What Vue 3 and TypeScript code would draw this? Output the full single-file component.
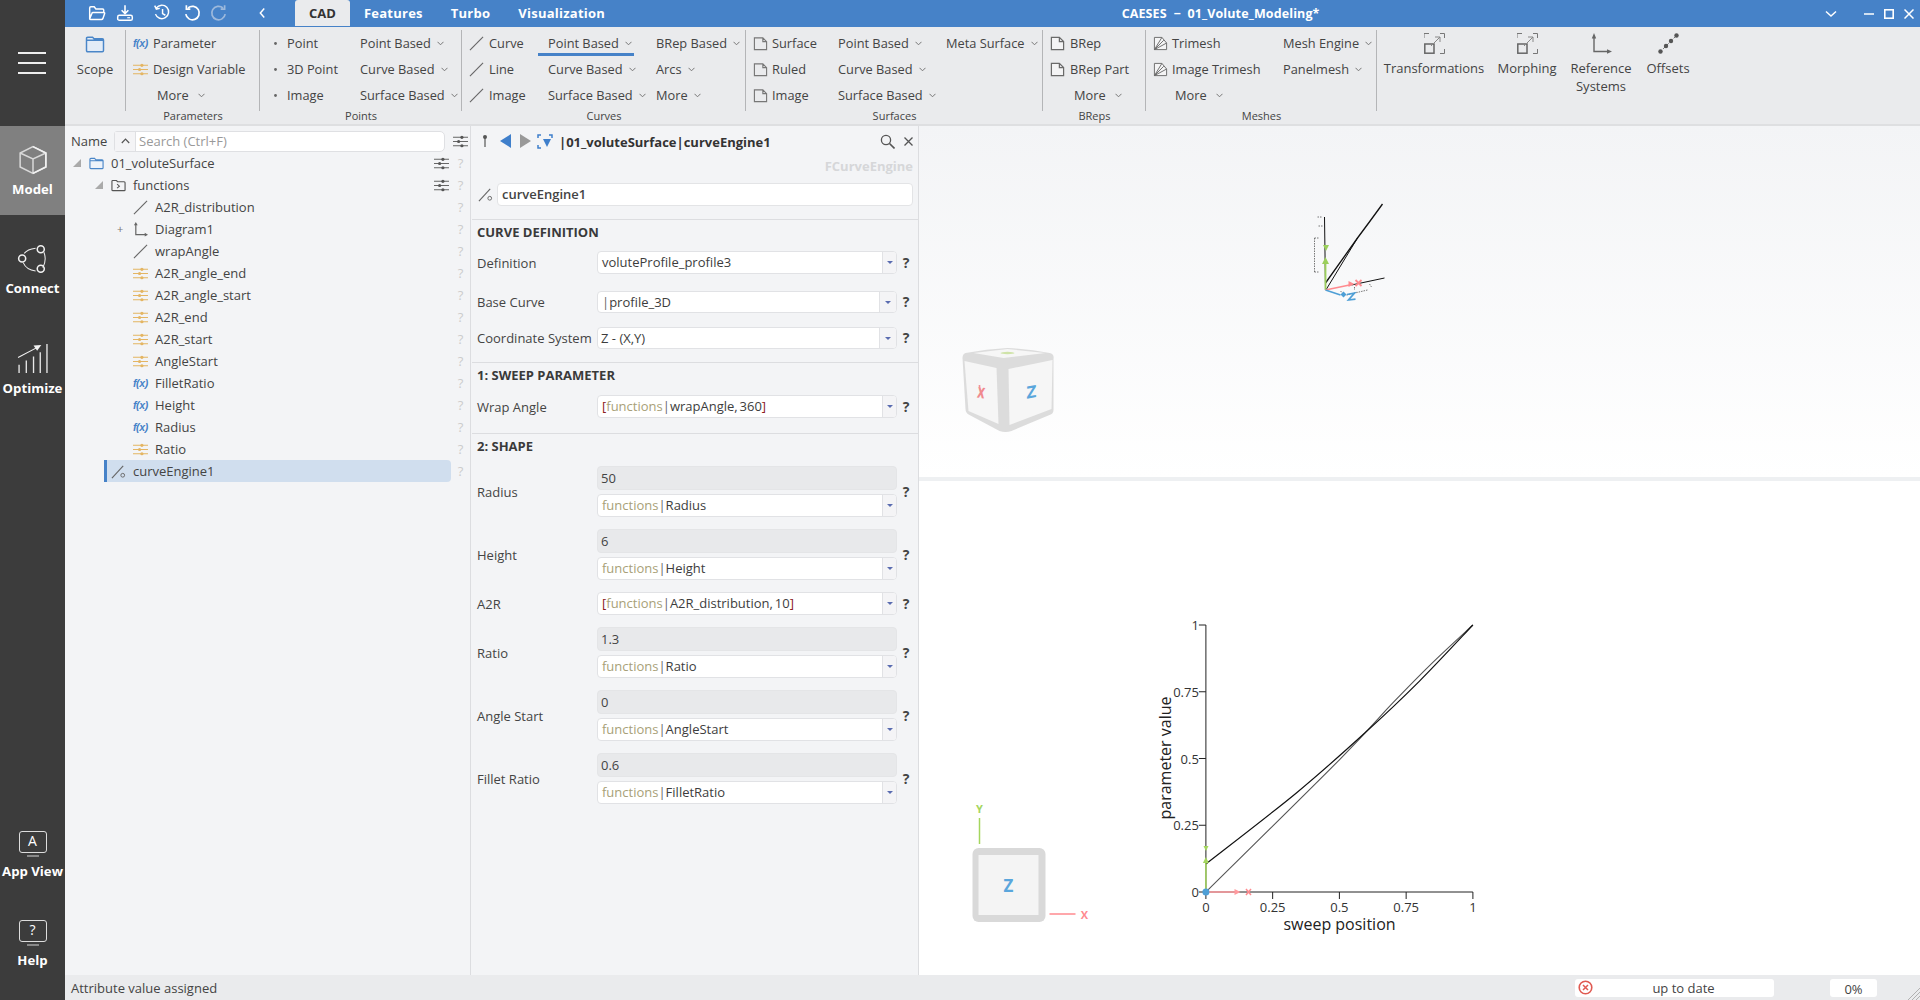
<script setup lang="ts">
type Item = { t: string; icon?: string; chev?: boolean; indent?: number };
type Col = { w: number; slot: number; items: Item[] };
type Group = { label: string; w: number; pad: number; cols: Col[] };

const quick = [
	{ icon: 'q-open', ml: 23 },
	{ icon: 'q-save', ml: 10 },
	{ icon: 'q-hist', ml: 19 },
	{ icon: 'q-undo', ml: 12 },
	{ icon: 'q-redo', ml: 9 },
	{ icon: 'q-back', ml: 25 },
];

const groups: Group[] = [
	{
		label: 'Parameters', w: 134, pad: 7,
		cols: [{
			w: 125, slot: 20,
			items: [
				{ t: 'Parameter', icon: 'fx' },
				{ t: 'Design Variable', icon: 'sliders' },
				{ t: 'More', chev: true, indent: 24 },
			],
		}],
	},
	{
		label: 'Points', w: 202, pad: 8,
		cols: [
			{ w: 92, slot: 19, items: [{ t: 'Point', icon: 'dot' }, { t: '3D Point', icon: 'dot' }, { t: 'Image', icon: 'dot' }] },
			{ w: 100, slot: 0, items: [{ t: 'Point Based', chev: true }, { t: 'Curve Based', chev: true }, { t: 'Surface Based', chev: true }] },
		],
	},
	{
		label: 'Curves', w: 284, pad: 7,
		cols: [
			{ w: 79, slot: 20, items: [{ t: 'Curve', icon: 'line' }, { t: 'Line', icon: 'line' }, { t: 'Image', icon: 'line' }] },
			{ w: 108, slot: 0, items: [{ t: 'Point Based', chev: true }, { t: 'Curve Based', chev: true }, { t: 'Surface Based', chev: true }] },
			{ w: 88, slot: 0, items: [{ t: 'BRep Based', chev: true }, { t: 'Arcs', chev: true }, { t: 'More', chev: true }] },
		],
	},
	{
		label: 'Surfaces', w: 297, pad: 7,
		cols: [
			{ w: 85, slot: 19, items: [{ t: 'Surface', icon: 'page' }, { t: 'Ruled', icon: 'page' }, { t: 'Image', icon: 'page' }] },
			{ w: 108, slot: 0, items: [{ t: 'Point Based', chev: true }, { t: 'Curve Based', chev: true }, { t: 'Surface Based', chev: true }] },
			{ w: 96, slot: 0, items: [{ t: 'Meta Surface', chev: true }] },
		],
	},
	{
		label: 'BReps', w: 103, pad: 7,
		cols: [{
			w: 95, slot: 20,
			items: [{ t: 'BRep', icon: 'brep' }, { t: 'BRep Part', icon: 'brep' }, { t: 'More', chev: true, indent: 24 }],
		}],
	},
	{
		label: 'Meshes', w: 231, pad: 7,
		cols: [
			{ w: 130, slot: 19, items: [{ t: 'Trimesh', icon: 'mesh' }, { t: 'Image Trimesh', icon: 'mesh' }, { t: 'More', chev: true, indent: 22 }] },
			{ w: 92, slot: 0, items: [{ t: 'Mesh Engine', chev: true }, { t: 'Panelmesh', chev: true }] },
		],
	},
];

const bigButtons = [
	{ lines: ['Transformations'], icon: 'big-trans', w: 114 },
	{ lines: ['Morphing'], icon: 'big-trans', w: 72 },
	{ lines: ['Reference', 'Systems'], icon: 'big-axis', w: 76 },
	{ lines: ['Offsets'], icon: 'big-offset', w: 58 },
];

const tree = [
	{ name: '01_voluteSurface', level: 0, icon: 'folder', exp: 'tri', tune: true },
	{ name: 'functions', level: 1, icon: 'folder-fn', exp: 'tri', tune: true },
	{ name: 'A2R_distribution', level: 2, icon: 'line' },
	{ name: 'Diagram1', level: 2, icon: 'axis', exp: 'plus' },
	{ name: 'wrapAngle', level: 2, icon: 'line' },
	{ name: 'A2R_angle_end', level: 2, icon: 'sliders' },
	{ name: 'A2R_angle_start', level: 2, icon: 'sliders' },
	{ name: 'A2R_end', level: 2, icon: 'sliders' },
	{ name: 'A2R_start', level: 2, icon: 'sliders' },
	{ name: 'AngleStart', level: 2, icon: 'sliders' },
	{ name: 'FilletRatio', level: 2, icon: 'fx' },
	{ name: 'Height', level: 2, icon: 'fx' },
	{ name: 'Radius', level: 2, icon: 'fx' },
	{ name: 'Ratio', level: 2, icon: 'sliders' },
	{ name: 'curveEngine1', level: 1, icon: 'engine', selected: true },
];

const shapeRows = [
	{ label: 'Radius', value: '50', fn: 'Radius' },
	{ label: 'Height', value: '6', fn: 'Height' },
	{ label: 'A2R', list: 'A2R_distribution, 10' },
	{ label: 'Ratio', value: '1.3', fn: 'Ratio' },
	{ label: 'Angle Start', value: '0', fn: 'AngleStart' },
	{ label: 'Fillet Ratio', value: '0.6', fn: 'FilletRatio' },
];

// plot area of the big diagram, in page pixels
const px = (t: number) => 1206.4 + 267 * t;
const py = (v: number) => 892 - 267 * v;
const ticks = [
	{ v: 0, l: '0' },
	{ v: 0.25, l: '0.25' },
	{ v: 0.5, l: '0.5' },
	{ v: 0.75, l: '0.75' },
	{ v: 1, l: '1' },
];

// catmull-rom through the sampled points so the curves stay smooth
function smooth(p: number[][]): string {
	const pts = p.map(([t, v]) => [px(t), py(v)]);
	let d = `M${pts[0][0]} ${pts[0][1]}`;
	for (let i = 0; i < pts.length - 1; i++) {
		const a = pts[Math.max(i - 1, 0)];
		const b = pts[i];
		const c = pts[i + 1];
		const e = pts[Math.min(i + 2, pts.length - 1)];
		d += `C${b[0] + (c[0] - a[0]) / 6} ${b[1] + (c[1] - a[1]) / 6} ${c[0] - (e[0] - b[0]) / 6} ${c[1] - (e[1] - b[1]) / 6} ${c[0]} ${c[1]}`;
	}
	return d;
}
const blackCurve = smooth([[0, 0.105], [0.34, 0.372], [0.6, 0.6], [0.8, 0.79], [1, 1]]);
const grayCurve = smooth([[0, 0], [0.5, 0.495], [0.7, 0.708], [0.85, 0.86], [1, 1]]);
</script>

<template>
	<div class="app">
		<svg class="sprites" aria-hidden="true">
			<symbol id="q-open" viewBox="0 0 16 16"><path d="M1.5 13V3.500q0-1 1-1h3l1.500 2h6q1 0 1 1V7M1.500 13q0 .8 1 .8h9.500q.8 0 1.200-.8l1.600-4.500q.2-1-.8-1H4.500q-.8 0-1 .7z" fill="none" stroke="currentColor" stroke-width="1.3" /></symbol>
			<symbol id="q-save" viewBox="0 0 16 16"><path d="M8 1v7M5 5.500 8 8.500l3-3" fill="none" stroke="currentColor" stroke-width="1.4" /><rect x="1.5" y="10" width="13" height="4.5" rx="1.5" fill="none" stroke="currentColor" stroke-width="1.3" /><path d="M10 12.200h2.500" stroke="currentColor" /></symbol>
			<symbol id="q-hist" viewBox="0 0 16 16"><path d="M3 3.500A6 6 0 1 1 2.200 9M1.500 1.500 3 4.500l3-.6M8.500 4.500V8.500L11 10" fill="none" stroke="currentColor" stroke-width="1.3" /></symbol>
			<symbol id="q-undo" viewBox="0 0 16 16"><path d="M4.500 3.500A6 6 0 1 1 2.500 9M3 1v3.500h3.500" fill="none" stroke="currentColor" stroke-width="1.5" /></symbol>
			<symbol id="q-redo" viewBox="0 0 16 16"><path d="M11.500 3.500A6 6 0 1 0 13.500 9M13 1v3.500H9.500" fill="none" stroke="#9db9dc" stroke-width="1.5" /></symbol>
			<symbol id="q-back" viewBox="0 0 16 16"><path d="M10 4 6.500 8l3.500 4" fill="none" stroke="currentColor" stroke-width="1.3" /></symbol>

			<symbol id="folder" viewBox="0 0 16 16"><path d="M1 3.500q0-1 1-1h4l1.200 1.500H14q1 0 1 1v7.500q0 1-1 1H2q-1 0-1-1z M1 5h14" fill="#eef3fa" stroke="#4a86c8" stroke-width="1.2" /></symbol>
			<symbol id="folder-fn" viewBox="0 0 16 16"><path d="M1 3.500q0-.8.8-.8h4l1.200 1.300h7q1 0 1 1v7.700q0 .8-.8.8H1.800q-.8 0-.8-.8z" fill="none" stroke="#555" stroke-width="1.2" /><path d="m6.500 6.500 2.500 2.200-2.500 2.200" fill="none" stroke="#555" stroke-width="1.1" /></symbol>
			<symbol id="sliders" viewBox="0 0 16 16"><g stroke="#e4b562" stroke-width="1.2"><path d="M0 3.500h16M0 8h16M0 12.500h16" /></g><circle cx="9.5" cy="3.5" r="1.7" fill="#e4b562" /><circle cx="7" cy="8" r="1.7" fill="#e4b562" /><circle cx="9.5" cy="12.5" r="1.7" fill="#e4b562" /></symbol>
			<symbol id="tune" viewBox="0 0 16 16"><g stroke="#666" stroke-width="1.2"><path d="M0 3.500h16M0 8h16M0 12.500h16" /></g><circle cx="9.5" cy="3.5" r="1.7" fill="#555" /><circle cx="6" cy="8" r="1.7" fill="#555" /><circle cx="9.5" cy="12.5" r="1.7" fill="#555" /></symbol>
			<symbol id="line" viewBox="0 0 16 16"><path d="M1 15 15 1" stroke="#666" stroke-width="1.2" /></symbol>
			<symbol id="engine" viewBox="0 0 16 16"><path d="M1 15 13 2" stroke="#666" stroke-width="1.2" /><circle cx="12.5" cy="12" r="2" fill="none" stroke="#666" /></symbol>
			<symbol id="axis" viewBox="0 0 16 16"><path d="M3 2v11.500h11" fill="none" stroke="#666" stroke-width="1.3" /><path d="M3 0 1 3.500h4zM16 13.500l-3.500-2v4z" fill="#666" /></symbol>
			<symbol id="dot" viewBox="0 0 16 16"><circle cx="8" cy="8" r="1.5" fill="#666" /></symbol>
			<symbol id="page" viewBox="0 0 16 16"><path d="M1.500 2h9l4 4v8.500h-13zM10.500 2v4h4" fill="none" stroke="#777" stroke-width="1.2" /></symbol>
			<symbol id="brep" viewBox="0 0 16 16"><path d="M1.500 1.500h8.500l4.500 4.500v8.500h-13zM10 1.500V6h4.500" fill="#f4f4f5" stroke="#6a6a6a" stroke-width="1.3" /></symbol>
			<symbol id="mesh" viewBox="0 0 16 16"><path d="M1.500 1.500h8l5 6v7h-13zM1.500 14.500 9.500 1.500M1.500 14.500l10-10M1.500 14.500l13-7" fill="#f4f4f5" stroke="#6a6a6a" stroke-width="1" /></symbol>

			<symbol id="big-trans" viewBox="0 0 21 21"><path d="M0 5V.5h5M16 .5h4.500V5M20.500 16v4.500H16" fill="none" stroke="#777" /><rect x=".8" y="11" width="9.2" height="9.2" fill="none" stroke="#666" stroke-width="1.5" /><path d="M7 13 16 4M11 4h5v5" fill="none" stroke="#888" /></symbol>
			<symbol id="big-axis" viewBox="0 0 21 21"><path d="M3 3v15.500h15" fill="none" stroke="#666" stroke-width="1.4" /><path d="M3 0 .8 5.500h4.400zM21 18.500l-5-2.200v4.400z" fill="#666" /></symbol>
			<symbol id="big-offset" viewBox="0 0 21 21"><path d="M1.500 19.500 19.500 1.500" stroke="#777" stroke-dasharray="3 2" /><circle cx="2.5" cy="18.5" r="2.2" fill="#555" /><circle cx="8" cy="13" r="2.2" fill="#555" /><circle cx="13" cy="8" r="2.2" fill="#555" /><circle cx="18.5" cy="2.5" r="2.2" fill="#555" /></symbol>

			<symbol id="r-cube" viewBox="0 0 28 28"><path d="M14 1.500 26 7.500v13L14 26.500 2 20.500v-13zM2 7.500 14 13l12-5.500M14 13v13.500" fill="none" stroke="#d8d8d8" stroke-width="1.4" /><path d="M14 1.500 26 7.500v13L14 26.500" fill="none" stroke="#f2f2f2" stroke-width="1.5" /></symbol>
			<symbol id="r-connect" viewBox="0 0 30 30"><path d="M7 10Q10 6 18 5M6 19q3 7 12 8M26 9q3 7-1 15" fill="none" stroke="#eee" stroke-width="1" /><g fill="none" stroke="#f2f2f2" stroke-width="1.5"><circle cx="23" cy="6" r="3.4" /><circle cx="5" cy="15" r="3.4" /><circle cx="23" cy="25" r="3.4" /></g></symbol>
			<symbol id="r-opt" viewBox="0 0 30 30"><g stroke="#e8e8e8" stroke-width="1.3"><path d="M2 29v-8M9 29V17M16 29V13M22.500 29V9M29 29V1" /></g><path d="M1 14 22 3" stroke="#f2f2f2" stroke-width="1" /><path d="M23.500 2 16 2.500l3.500 5z" fill="#f2f2f2" /></symbol>
		</svg>

		<aside class="rail">
			<div class="burger"><i /><i /><i /></div>
			<div class="rail-item active">
				<svg class="r-icon" width="30" height="30"><use href="#r-cube" /></svg>
				<span>Model</span>
			</div>
			<div class="rail-item connect">
				<svg class="r-icon" width="31" height="31"><use href="#r-connect" /></svg>
				<span>Connect</span>
			</div>
			<div class="rail-item optimize">
				<svg class="r-icon" width="31" height="31"><use href="#r-opt" /></svg>
				<span>Optimize</span>
			</div>
			<div class="rail-item appview">
				<div class="monitor">A</div>
				<span>App View</span>
			</div>
			<div class="rail-item help">
				<div class="monitor">?</div>
				<span>Help</span>
			</div>
		</aside>

		<main class="main">
			<header class="titlebar">
				<svg v-for="q in quick" :key="q.icon" class="quick" :style="{ marginLeft: q.ml + 'px' }" width="18" height="18"><use :href="'#' + q.icon" /></svg>
				<nav class="tabs">
					<span class="tab current">CAD</span>
					<span class="tab">Features</span>
					<span class="tab">Turbo</span>
					<span class="tab">Visualization</span>
				</nav>
				<div class="title">CAESES &nbsp;&minus;&nbsp; 01_Volute_Modeling*</div>
				<div class="winctl">
					<svg width="12" height="8" viewBox="0 0 12 8"><path d="M1 1.500 6 6l5-4.500" fill="none" stroke="#fff" stroke-width="1.5" /></svg>
					<svg class="w-min" width="10" height="10" viewBox="0 0 10 10"><path d="M0 5h10" stroke="#fff" stroke-width="1.5" /></svg>
					<svg class="w-max" width="10" height="10" viewBox="0 0 10 10"><rect x=".8" y=".8" width="8.4" height="8.4" fill="none" stroke="#fff" stroke-width="1.6" /></svg>
					<svg class="w-close" width="10" height="10" viewBox="0 0 10 10"><path d="m.5.5 9 9m0-9-9 9" stroke="#fff" stroke-width="1.5" /></svg>
				</div>
			</header>

			<section class="ribbon">
				<div class="group scope">
					<div class="group-body big">
						<svg width="20" height="17" viewBox="0 0 16 14" class="scope-icon"><path d="M1 2q0-1 1-1h4l1.200 1.200H14q1 0 1 1V12q0 1-1 1H2q-1 0-1-1zM1 3.500h14" fill="#e3ecf7" stroke="#4a86c8" stroke-width="1.2" /></svg>
						<span>Scope</span>
					</div>
				</div>
				<div v-for="g in groups" :key="g.label" class="group" :style="{ width: g.w + 'px' }">
					<div class="group-body" :style="{ paddingLeft: g.pad + 'px' }">
						<div v-for="(c, ci) in g.cols" :key="ci" class="col" :style="{ width: c.w + 'px' }">
							<div
								v-for="it in c.items"
								:key="it.t"
								class="item"
								:class="{ underlined: g.label === 'Curves' && ci === 1 && it.t === 'Point Based' }"
								:style="{ marginLeft: (it.indent ?? 0) + 'px' }"
							>
								<span v-if="it.icon" class="slot" :style="{ width: c.slot + 'px' }">
									<span v-if="it.icon === 'fx'" class="fx">f(x)</span>
									<svg v-else width="15" height="15"><use :href="'#' + it.icon" /></svg>
								</span>
								<span>{{ it.t }}</span>
								<svg v-if="it.chev" class="chev" :class="{ wide: it.indent }" width="7" height="5" viewBox="0 0 7 5"><path d="m.5.8 3 3 3-3" fill="none" stroke="#777" /></svg>
							</div>
						</div>
					</div>
					<div class="group-label">{{ g.label }}</div>
				</div>
				<div class="bigs">
					<div v-for="b in bigButtons" :key="b.lines[0]" class="bigbtn" :style="{ width: b.w + 'px' }">
						<svg width="21" height="21"><use :href="'#' + b.icon" /></svg>
						<span v-for="l in b.lines" :key="l">{{ l }}</span>
					</div>
				</div>
			</section>

			<div class="workspace">
				<section class="tree">
					<div class="tree-head">
						<span class="name-col">Name</span>
						<div class="search">
							<span class="sort"><svg width="9" height="6" viewBox="0 0 9 6"><path d="M.8 5 4.500 1.200 8.200 5" fill="none" stroke="#555" stroke-width="1.2" /></svg></span>
							<span class="search-text">Search (Ctrl+F)</span>
						</div>
						<svg class="head-tune" width="15" height="15"><use href="#tune" /></svg>
					</div>
					<div v-for="r in tree" :key="r.name" class="row">
						<div class="row-main" :class="{ selected: r.selected }" :style="{ marginLeft: r.selected ? undefined : 6 + 22 * r.level + 'px' }">
							<span v-if="!r.selected" class="exp">
								<svg v-if="r.exp === 'tri'" width="8" height="8" viewBox="0 0 8 8"><path d="M8 0v8H0z" fill="#aaa" /></svg>
								<span v-else-if="r.exp === 'plus'" class="plus">+</span>
							</span>
							<span class="row-icon">
								<span v-if="r.icon === 'fx'" class="fx">f(x)</span>
								<svg v-else width="15" height="15"><use :href="'#' + r.icon" /></svg>
							</span>
							<span class="row-name">{{ r.name }}</span>
							<svg v-if="r.tune" width="15" height="15"><use href="#tune" /></svg>
						</div>
						<span class="row-q">?</span>
					</div>
				</section>

				<section class="props">
					<div class="prop-head">
						<svg width="10" height="14" viewBox="0 0 10 14"><circle cx="5" cy="3" r="2" fill="#555" /><path d="M5 4v9" stroke="#555" stroke-width="1.2" /></svg>
						<svg class="nav-l" width="12" height="14" viewBox="0 0 12 14"><path d="M11 0v14L0 7z" fill="#3f7fcb" /></svg>
						<svg class="nav-r" width="12" height="14" viewBox="0 0 12 14"><path d="M1 0v14l11-7z" fill="#999" /></svg>
						<svg class="nav-f" width="16" height="15" viewBox="0 0 16 15"><path d="M1 4V1h3M12 1h3v3M1 11v3h3" fill="none" stroke="#3f7fcb" stroke-width="1.5" /><path d="M6 5h8l-4 8z" fill="#3f7fcb" /></svg>
						<span class="path">|01_voluteSurface|curveEngine1</span>
						<svg width="15" height="15" viewBox="0 0 15 15"><circle cx="6" cy="6" r="4.6" fill="none" stroke="#555" stroke-width="1.3" /><path d="m9.500 9.500 5 5" stroke="#555" stroke-width="1.6" /></svg>
						<svg class="close-x" width="9" height="9" viewBox="0 0 9 9"><path d="m.5.5 8 8m0-8-8 8" stroke="#555" stroke-width="1.3" /></svg>
					</div>
					<div class="prop-type">FCurveEngine</div>
					<div class="prop-name">
						<svg width="15" height="15"><use href="#engine" /></svg>
						<div class="name-input">curveEngine1</div>
					</div>

					<div class="section first">
						<h3>CURVE DEFINITION</h3>
						<div class="frow">
							<label>Definition</label>
							<div class="combo"><span class="val">voluteProfile_profile3</span><span class="drop"><i /></span></div>
							<b>?</b>
						</div>
						<div class="frow base">
							<label>Base Curve</label>
							<div class="combo short"><span class="val"><span class="bar">|</span>profile_3D</span><span class="drop wide"><i /></span></div>
							<b>?</b>
						</div>
						<div class="frow coord">
							<label>Coordinate System</label>
							<div class="combo short"><span class="val tight">Z - (X,Y)</span><span class="drop wide"><i /></span></div>
							<b>?</b>
						</div>
					</div>

					<div class="section sweep">
						<h3>1: SWEEP PARAMETER</h3>
						<div class="frow">
							<label>Wrap Angle</label>
							<div class="combo"><span class="val list"><span class="br">[</span><span class="ns">functions</span><span class="bar">|</span>wrapAngle, 360<span class="br">]</span></span><span class="drop"><i /></span></div>
							<b>?</b>
						</div>
					</div>

					<div class="section shape">
						<h3>2: SHAPE</h3>
						<div v-for="s in shapeRows" :key="s.label" class="frow">
							<label>{{ s.label }}</label>
							<div class="stack">
								<div v-if="s.value" class="gray">{{ s.value }}</div>
								<div class="combo">
									<span v-if="s.list" class="val list"><span class="br">[</span><span class="ns">functions</span><span class="bar">|</span>{{ s.list }}<span class="br">]</span></span>
									<span v-else class="val"><span class="ns">functions</span><span class="bar">|</span>{{ s.fn }}</span>
									<span class="drop"><i /></span>
								</div>
							</div>
							<b>?</b>
						</div>
					</div>
				</section>

				<section class="views">
					<div class="view view-top">
						<svg class="canvas" viewBox="920 126 1000 351">
							<!-- orientation cube -->
							<path d="M966 353Q987 349 1008 348Q1030 349 1050 353Q1055 354 1054 359V410Q1054 414 1050 415L1012 431Q1006 433 1000 431L970 415Q966 413 966 409L963 358Q963 354 966 353Z" fill="#dcdcdc" />
							<path d="M974 353 1008 349 1046 353 1004 358Z" fill="#f6f6f6" />
							<ellipse cx="1008" cy="353" rx="7" ry="1.2" fill="#cfe3a8" />
							<path d="M965 361 997 368 999 424 969 411Z" fill="#f6f6f6" />
							<path d="M1009 369 1053 360 1052 409 1010 425Z" fill="#f6f6f6" />
							<text class="cube-x" transform="translate(981 398) rotate(8) scale(.75 1.15)">x</text>
							<circle cx="980" cy="386" r="1" fill="#f08a8e" />
							<text class="cube-z" transform="translate(1032 398) skewY(-10)">Z</text>
							<!-- miniature of the diagram, seen in perspective -->
							<g fill="none" stroke="#111">
								<path d="M1325 217 1326 290M1352 285 1385 278" stroke-width="1" />
								<path d="M1326 283 1358 238Q1370 222 1383 204" stroke-width="1.3" />
								<path d="M1327 289 1358 238" stroke-width="1" />
							</g>
							<g fill="none" stroke="#555" stroke-width=".8" stroke-dasharray="1.5 1">
								<path d="M1315 238V272M1315 238h5M1315 272h5M1318 217h4M1319 226h4" />
								<path d="M1347 295 1368 290M1341 291l3 3M1355 287v3M1370 284l2 3" />
							</g>
							<path d="M1326 290V262" stroke="#9bcf5b" stroke-width="1.8" />
							<path d="M1326 257l-3.500 7h7zM1323.500 245h6l-3 6z" fill="#9bcf5b" />
							<path d="M1326 290 1350 285" stroke="#ff8a8f" stroke-width="1.6" />
							<path d="M1355 284l-6-3v6z" fill="#ff8a8f" />
							<path d="M1356 280l6 6m0-6-6 6" stroke="#ff8a8f" stroke-width="1.8" />
							<path d="M1326 290 1341 295" stroke="#4e9fd6" stroke-width="1.6" />
							<path d="M1344 291.500l3 3-3 3-3-3z" fill="#4e9fd6" />
							<path d="M1347.500 294.500l7.500-1.500-6 7 7-.8" fill="none" stroke="#4e9fd6" stroke-width="1.7" />
						</svg>
					</div>
					<div class="view-split" />
					<div class="view view-bottom">
						<svg class="canvas" viewBox="920 481 1000 494">
							<!-- plane navigator -->
							<rect x="973" y="848" width="73" height="74" rx="6" fill="#d9d9d9" />
							<rect x="979" y="855" width="60" height="60" fill="#f4f4f4" />
							<text x="1009" y="892" class="nav-z">Z</text>
							<path d="M980 818V844" stroke="#a4d65e" stroke-width="1.5" />
							<text x="980" y="813" class="nav-y">Y</text>
							<path d="M1050 914H1076" stroke="#ff8a8f" stroke-width="1.5" />
							<text x="1085" y="919" class="nav-xl">X</text>

							<!-- diagram -->
							<path :d="`M${px(0)} ${py(1)}V${py(0)}H${px(1)}`" fill="none" stroke="#222" stroke-width="1" />
							<g v-for="t in ticks" :key="t.l">
								<path :d="`M${px(0) - 7} ${py(t.v)}H${px(0)}`" stroke="#222" />
								<path :d="`M${px(t.v)} ${py(0)}v7`" stroke="#222" />
								<text :x="px(0) - 7" :y="py(t.v) + 5" class="tick" text-anchor="end">{{ t.l }}</text>
								<text :x="px(t.v)" :y="912" class="tick" text-anchor="middle">{{ t.l }}</text>
							</g>
							<path :d="grayCurve" fill="none" stroke="#555" stroke-width="1.1" />
							<path :d="blackCurve" fill="none" stroke="#111" stroke-width="1.2" />
							<text x="1340" y="930" class="axis-label" text-anchor="middle">sweep position</text>
							<text class="axis-label" text-anchor="middle" transform="translate(1171 758) rotate(-90)">parameter value</text>
							<!-- triad -->
							<path d="M1206.400 892V862" stroke="#a4d65e" stroke-width="1.5" />
							<path d="M1206.400 857l-3 6h6zM1204 846h5l-2.500 5z" fill="#a4d65e" />
							<path d="M1206.400 892H1236" stroke="#ff9a9e" stroke-width="1.5" />
							<path d="M1241 892l-6-3v6z" fill="#ff9a9e" />
							<path d="M1246.500 889l5 6m0-6-5 6" stroke="#ff8a8f" stroke-width="1.5" />
							<circle cx="1206.4" cy="892" r="3.5" fill="#4e9fd6" />
						</svg>
					</div>
				</section>
			</div>

			<footer class="status">
				<span class="status-text">Attribute value assigned</span>
				<div class="uptodate">
					<svg width="15" height="15" viewBox="0 0 15 15"><circle cx="7.5" cy="7.5" r="6.3" fill="none" stroke="#e05a52" stroke-width="1.6" /><path d="m5 5 5 5m0-5-5 5" stroke="#e05a52" stroke-width="1.5" /></svg>
					<span>up to date</span>
				</div>
				<div class="percent">0%</div>
				<svg class="grip" width="12" height="12" viewBox="0 0 12 12"><path d="M0 12 12 0M4 12l8-8M8 12l4-4" stroke="#aaa" stroke-width=".9" /></svg>
			</footer>
		</main>
	</div>
</template>

<style scoped>
.app {
	display: flex;
	width: 1920px;
	height: 1000px;
	overflow: hidden;
	font: 13px/18px 'Open Sans', sans-serif;
	color: #444;
	background: #f3f4f6;
}
.sprites {
	position: absolute;
	width: 0;
	height: 0;
}

/* left rail */
.rail {
	display: flex;
	flex-direction: column;
	align-items: stretch;
	flex: none;
	width: 65px;
	padding-bottom: 13px;
	box-sizing: border-box;
	background: #3c3c3c;
	color: #fff;
}
.burger {
	display: flex;
	flex-direction: column;
	gap: 8.5px;
	height: 126px;
	padding: 52px 19px 0 18px;
	box-sizing: border-box;
}
.burger i {
	height: 1.5px;
	background: #eee;
}
.rail-item {
	position: relative;
	display: flex;
	flex-direction: column;
	align-items: center;
	height: 89px;
	font-weight: 700;
	font-size: 13.2px;
}
.rail-item span {
	position: absolute;
	top: 54px;
	white-space: nowrap;
}
.r-icon {
	margin-top: 19px;
}
.rail-item.active {
	background: #808080;
}
.connect {
	margin-top: 9px;
}
.connect span,
.optimize span {
	top: 55px;
}
.optimize {
	margin-top: 11px;
}
.appview {
	margin-top: auto;
}
.help {
	height: 90px;
}
.monitor {
	position: relative;
	width: 28px;
	height: 22px;
	margin-top: 23px;
	border: 1.5px solid #ddd;
	border-radius: 3px;
	box-sizing: border-box;
	text-align: center;
	line-height: 18px;
	font-weight: 400;
	font-size: 14px;
}
.monitor::after {
	content: '';
	position: absolute;
	left: 7px;
	right: 7px;
	bottom: -5px;
	height: 2px;
	background: #888;
}

.main {
	display: flex;
	flex-direction: column;
	flex: 1;
	min-width: 0;
}

/* title bar */
.titlebar {
	display: flex;
	align-items: center;
	flex: none;
	height: 27px;
	background: #4682c8;
	color: #fff;
}
.quick {
	flex: none;
	margin-top: -1px;
}
.tabs {
	display: flex;
	align-self: flex-end;
	margin-left: 24px;
}
.tab {
	padding: 0 14px;
	font-weight: 700;
	line-height: 27px;
	letter-spacing: 0.25px;
}
.tab.current {
	background: #eaebed;
	color: #333;
	border-radius: 3px 3px 0 0;
	height: 26px;
	letter-spacing: 0;
}
.title {
	flex: 1;
	text-align: center;
	font-weight: 700;
	font-size: 12.5px;
	letter-spacing: 0.12px;
}
.winctl {
	display: flex;
	align-items: center;
	flex: none;
	width: 98px;
	padding-left: 3px;
	box-sizing: border-box;
}
.w-min {
	margin-left: 27px;
}
.w-max,
.w-close {
	margin-left: 10px;
}

/* ribbon */
.ribbon {
	display: flex;
	flex: none;
	height: 99px;
	padding-top: 3px;
	box-sizing: border-box;
	background: #eaebed;
	border-bottom: 2px solid #dedfe1;
}
.group {
	flex: none;
	box-sizing: border-box;
}
.scope {
	width: 61px;
}
.group-body {
	display: flex;
	height: 81px;
	box-sizing: border-box;
	border-right: 1px solid #b4b5b7;
}
.group-body.big {
	flex-direction: column;
	align-items: center;
}
.scope-icon {
	margin-top: 6px;
	margin-bottom: 7px;
}
.group-label {
	text-align: center;
	font-size: 11px;
	line-height: 11px;
	margin-top: -1px;
}
.col {
	flex: none;
}
.item {
	position: relative;
	display: flex;
	align-items: center;
	height: 26px;
	white-space: nowrap;
	font-size: 12.8px;
}
.item.underlined::after {
	content: '';
	position: absolute;
	left: -10px;
	width: 96px;
	top: 23px;
	height: 3px;
	background: #4682c8;
}
.slot {
	display: inline-flex;
	align-items: center;
	flex: none;
}
.fx {
	font: italic 700 10.5px 'Liberation Sans', sans-serif;
	color: #4682c8;
	letter-spacing: -0.4px;
}
.chev {
	flex: none;
	margin-left: 6px;
}
.chev.wide {
	margin-left: 9px;
}
.bigs {
	display: flex;
}
.bigbtn {
	display: flex;
	flex-direction: column;
	align-items: center;
	flex: none;
	padding-top: 3px;
	white-space: nowrap;
}
.bigbtn svg {
	margin-bottom: 5px;
}

/* workspace */
.workspace {
	display: flex;
	flex: 1;
	min-height: 0;
}
.tree {
	flex: none;
	width: 405px;
	box-sizing: border-box;
}
.tree-head {
	display: flex;
	align-items: center;
	height: 26px;
	padding: 4px 0 0 6px;
	box-sizing: border-box;
}
.name-col {
	width: 43px;
}
.search {
	display: flex;
	width: 331px;
	height: 21px;
	border: 1px solid #dfe0e3;
	border-radius: 3px 5px 5px 3px;
	box-sizing: border-box;
	background: #fff;
}
.sort {
	display: flex;
	align-items: center;
	justify-content: center;
	width: 20px;
	background: #f4f4f6;
	border-right: 1px solid #dfe0e3;
}
.search-text {
	padding-left: 3px;
	color: #999;
	line-height: 19px;
}
.head-tune {
	margin-left: 8px;
}
.row {
	display: flex;
	align-items: center;
	height: 22px;
}
.row-main {
	display: flex;
	align-items: center;
	flex: 1;
	height: 22px;
	padding-right: 2px;
}
.row-main.selected {
	margin-left: 39px;
	padding-left: 4px;
	background: #d0deee;
	border-left: 3px solid #4682c8;
	border-radius: 0 4px 4px 0;
}
.exp {
	display: flex;
	align-items: center;
	flex: none;
	width: 18px;
	padding-left: 2px;
	box-sizing: border-box;
}
.plus {
	color: #777;
	font-size: 11px;
}
.row-icon {
	display: flex;
	align-items: center;
	flex: none;
	width: 22px;
}
.row-name {
	flex: 1;
}
.row-q {
	flex: none;
	width: 19px;
	text-align: center;
	color: #ccc;
}

/* property panel */
.props {
	flex: none;
	width: 449px;
	padding-left: 1px;
	border-left: 1px solid #dcdde0;
	border-right: 1px solid #dcdde0;
	box-sizing: border-box;
}
.prop-head {
	display: flex;
	align-items: center;
	height: 32px;
	padding: 0 5px 2px 8px;
	box-sizing: border-box;
}
.nav-l {
	margin-left: 10px;
}
.nav-r {
	margin-left: 7px;
}
.nav-f {
	margin-left: 6px;
}
.path {
	flex: 1;
	margin: 2px 0 0 6px;
	font-weight: 700;
	color: #333;
}
.close-x {
	margin-left: 9px;
}
.prop-type {
	height: 25px;
	margin-top: -1px;
	margin-bottom: 1px;
	padding-right: 5px;
	box-sizing: border-box;
	text-align: right;
	font-weight: 700;
	color: #d6d7d9;
}
.prop-name {
	display: flex;
	align-items: center;
	height: 36px;
	padding: 0 5px 13px 6px;
	box-sizing: border-box;
}
.name-input {
	flex: 1;
	height: 23px;
	margin-left: 4px;
	padding-left: 4px;
	border: 1px solid #e3e4e6;
	border-radius: 4px;
	box-sizing: border-box;
	background: #fff;
	font-weight: 600;
	line-height: 20px;
}
.section {
	padding-left: 5px;
	border-top: 1px solid #dcdde0;
}
.section h3 {
	margin: 0;
	height: 25px;
	font-size: 13px;
	font-weight: 700;
	line-height: 24px;
	color: #3a3a3a;
}
.first {
	height: 143px;
	box-sizing: border-box;
}
.first h3 {
	margin-bottom: 6px;
}
.sweep {
	height: 71px;
	box-sizing: border-box;
}
.sweep h3 {
	margin-bottom: 7px;
}
.shape h3 {
	margin-bottom: 7px;
}
.frow {
	display: flex;
	align-items: center;
}
.frow label {
	flex: none;
	width: 120px;
}
.frow b {
	flex: none;
	width: 18px;
	box-sizing: border-box;
	text-align: center;
	font-size: 14px;
	color: #444;
}
.base {
	margin-top: 17px;
}
.coord {
	margin-top: 14px;
}
.shape .frow + .frow {
	margin-top: 12px;
}
.stack {
	display: flex;
	flex-direction: column;
	gap: 4px;
	width: 300px;
}
.combo {
	display: flex;
	width: 300px;
	height: 23px;
	border: 1px solid #e1e2e5;
	border-radius: 4px;
	box-sizing: border-box;
	background: #fff;
}
.combo.short {
	height: 22px;
}
.val {
	flex: 1;
	padding-left: 4px;
	line-height: 20px;
	white-space: nowrap;
	color: #3d3d3d;
}
.val.tight {
	padding-left: 3px;
}
.val.list {
	word-spacing: -1.5px;
}
.drop {
	display: flex;
	align-items: center;
	justify-content: center;
	flex: none;
	width: 13px;
	border-left: 1px solid #e1e2e5;
	background: #f4f4f6;
	border-radius: 0 3px 3px 0;
}
.drop.wide {
	width: 16px;
}
.drop i {
	border: 3px solid transparent;
	border-top: 3px solid #5a6cb0;
	margin-top: 3px;
}
.ns {
	color: #a89f78;
}
.bar {
	color: #666;
}
.br {
	color: #8c1c1c;
}
.gray {
	height: 24px;
	padding-left: 3px;
	border: 1px solid #e4e5e7;
	border-radius: 4px;
	box-sizing: border-box;
	background: #e8e9eb;
	line-height: 22px;
}

/* 3D views */
.views {
	display: flex;
	flex-direction: column;
	flex: 1;
	min-width: 0;
	background: #fff;
}
.view {
	position: relative;
}
.view-top {
	flex: none;
	height: 351px;
	background: linear-gradient(#f3f4f6, #ffffff);
}
.view-split {
	flex: none;
	height: 4px;
	background: #eef0f2;
}
.view-bottom {
	flex: 1;
	background: #fff;
}
.canvas {
	position: absolute;
	inset: 0;
	width: 100%;
	height: 100%;
}
.cube-x {
	font: 700 17px 'Open Sans', sans-serif;
	fill: #f08a8e;
	text-anchor: middle;
}
.cube-z {
	font: 700 17px 'Open Sans', sans-serif;
	fill: #5aa6dc;
	text-anchor: middle;
}
.nav-z {
	font: 700 17px 'Open Sans', sans-serif;
	fill: #5aa6dc;
	text-anchor: middle;
}
.nav-y {
	font: 700 11px 'Open Sans', sans-serif;
	fill: #a4d65e;
	text-anchor: middle;
}
.nav-xl {
	font: 700 11px 'Open Sans', sans-serif;
	fill: #ff8a8f;
	text-anchor: middle;
}
.tick {
	font: 13px 'Open Sans', sans-serif;
	fill: #333;
}
.axis-label {
	font: 16px 'Open Sans', sans-serif;
	fill: #222;
}

/* status bar */
.status {
	display: flex;
	align-items: center;
	flex: none;
	position: relative;
	height: 25px;
	background: #eaebed;
	line-height: 20px;
}
.status-text {
	padding-left: 6px;
	flex: none;
	width: 1510px;
	box-sizing: border-box;
}
.uptodate {
	display: flex;
	align-items: center;
	flex: none;
	width: 199px;
	height: 18px;
	padding-left: 3px;
	box-sizing: border-box;
	border-radius: 3px;
	background: #fff;
}
.uptodate span {
	flex: 1;
	padding-top: 1px;
	text-align: center;
}
.percent {
	flex: none;
	width: 47px;
	height: 18px;
	margin-left: 56px;
	border-radius: 3px;
	background: #fff;
	text-align: center;
}
.grip {
	position: absolute;
	right: 0;
	bottom: 0;
}
</style>

<style>
html,
body {
	margin: 0;
	overflow: hidden;
}
</style>
